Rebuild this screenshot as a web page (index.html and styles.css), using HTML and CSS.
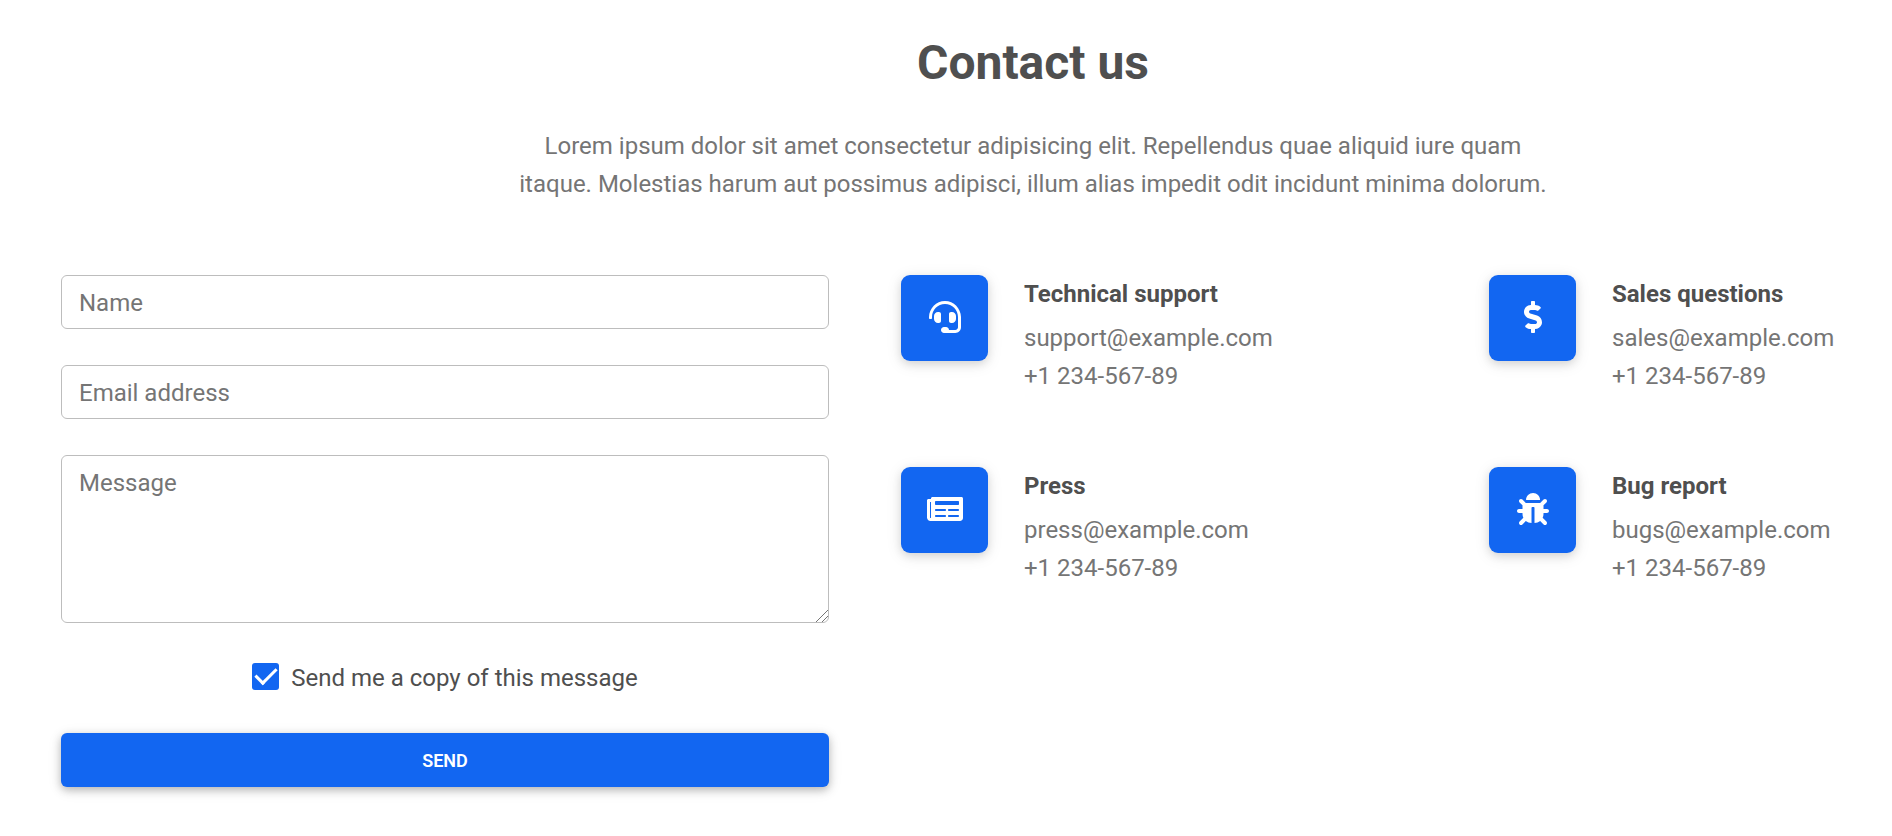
FILE: index.html
```html
<!DOCTYPE html>
<html lang="en">
<head>
<meta charset="utf-8">
<meta name="viewport" content="width=device-width, initial-scale=1">
<title>Contact us</title>
<link rel="stylesheet" href="styles.css">
</head>
<body>
<main class="contact">
  <header class="intro">
    <h1 class="intro-title">Contact us</h1>
    <p class="intro-text">Lorem ipsum dolor sit amet consectetur adipisicing elit. Repellendus quae aliquid iure quam itaque. Molestias harum aut possimus adipisci, illum alias impedit odit incidunt minima dolorum.</p>
  </header>
  <div class="columns">
    <form class="form">
      <input class="field" type="text" name="name" placeholder="Name" aria-label="Name">
      <input class="field" type="email" name="email" placeholder="Email address" aria-label="Email address">
      <textarea class="field field-message" name="message" placeholder="Message" aria-label="Message"></textarea>
      <div class="check">
        <input class="check-input" type="checkbox" id="copy" name="copy" checked>
        <label class="check-label" for="copy">Send me a copy of this message</label>
      </div>
      <button class="send" type="button">SEND</button>
    </form>
    <div class="channels">
      <section class="channel">
        <div class="tile"><svg class="icon" viewBox="0 0 512 512" aria-hidden="true"><path d="M192 208c0-17.67-14.33-32-32-32h-16c-35.35 0-64 28.65-64 64v48c0 35.35 28.65 64 64 64h16c17.67 0 32-14.33 32-32V208zm176 144c35.35 0 64-28.65 64-64v-48c0-35.35-28.65-64-64-64h-16c-17.67 0-32 14.33-32 32v112c0 17.67 14.33 32 32 32h16zM256 0C113.18 0 4.58 118.83 0 256v16c0 8.84 7.16 16 16 16h16c8.84 0 16-7.16 16-16v-16c0-114.69 93.31-208 208-208s208 93.31 208 208h-.12c.08 2.43.12 165.72.12 165.72 0 23.35-18.93 42.28-42.28 42.28H320c0-26.51-21.49-48-48-48h-32c-26.51 0-48 21.49-48 48s21.49 48 48 48h181.72c49.86 0 90.28-40.42 90.28-90.28V256C507.42 118.83 398.82 0 256 0z"/></svg></div>
        <div class="details">
          <h2 class="details-title">Technical support</h2>
          <p class="details-line">support@example.com</p>
          <p class="details-line">+1 234-567-89</p>
        </div>
      </section>
      <section class="channel">
        <div class="tile"><svg class="icon" viewBox="0 0 288 512" aria-hidden="true"><path d="M209.2 233.4l-108-31.6C88.7 198.2 80 186.5 80 173.5c0-16.3 13.2-29.5 29.5-29.5h66.3c12.2 0 24.2 3.7 34.2 10.5 6.1 4.1 14.3 3.1 19.5-2l34.8-34c7.1-6.9 6.1-18.4-1.8-24.5C238 74.8 207.4 64.1 176 64V16c0-8.8-7.2-16-16-16h-32c-8.8 0-16 7.2-16 16v48h-2.5C45.8 64-5.4 118.7.5 183.6c4.2 46.1 39.4 83.6 83.8 96.6l102.5 30c12.5 3.7 21.2 15.3 21.2 28.3 0 16.3-13.2 29.5-29.5 29.5h-66.3C100 368 88 364.3 78 357.5c-6.1-4.1-14.3-3.1-19.5 2l-34.8 34c-7.1 6.9-6.1 18.4 1.8 24.5 24.5 19.2 55.1 29.9 86.5 30v48c0 8.8 7.2 16 16 16h32c8.8 0 16-7.2 16-16v-48.2c46.6-.9 90.3-28.6 105.7-72.7 21.5-61.6-14.6-124.8-72.5-141.7z"/></svg></div>
        <div class="details">
          <h2 class="details-title">Sales questions</h2>
          <p class="details-line">sales@example.com</p>
          <p class="details-line">+1 234-567-89</p>
        </div>
      </section>
      <section class="channel">
        <div class="tile"><svg class="icon" viewBox="0 0 576 512" aria-hidden="true"><path d="M552 64H88c-13.255 0-24 10.745-24 24v8H24c-13.255 0-24 10.745-24 24v272c0 30.928 25.072 56 56 56h472c26.51 0 48-21.49 48-48V88c0-13.255-10.745-24-24-24zM56 400a8 8 0 0 1-8-8V144h16v248a8 8 0 0 1-8 8zm236-16H140c-6.627 0-12-5.373-12-12v-8c0-6.627 5.373-12 12-12h152c6.627 0 12 5.373 12 12v8c0 6.627-5.373 12-12 12zm208 0H348c-6.627 0-12-5.373-12-12v-8c0-6.627 5.373-12 12-12h152c6.627 0 12 5.373 12 12v8c0 6.627-5.373 12-12 12zm-208-96H140c-6.627 0-12-5.373-12-12v-8c0-6.627 5.373-12 12-12h152c6.627 0 12 5.373 12 12v8c0 6.627-5.373 12-12 12zm208 0H348c-6.627 0-12-5.373-12-12v-8c0-6.627 5.373-12 12-12h152c6.627 0 12 5.373 12 12v8c0 6.627-5.373 12-12 12zm0-96H140c-6.627 0-12-5.373-12-12v-40c0-6.627 5.373-12 12-12h360c6.627 0 12 5.373 12 12v40c0 6.627-5.373 12-12 12z"/></svg></div>
        <div class="details">
          <h2 class="details-title">Press</h2>
          <p class="details-line">press@example.com</p>
          <p class="details-line">+1 234-567-89</p>
        </div>
      </section>
      <section class="channel">
        <div class="tile"><svg class="icon" viewBox="0 0 512 512" aria-hidden="true"><path d="M511.988 288.9c-.478 17.43-15.217 31.1-32.653 31.1H424v16c0 21.864-4.882 42.584-13.6 61.145l60.228 60.228c12.496 12.497 12.496 32.758 0 45.255-12.498 12.497-32.759 12.496-45.256 0l-54.736-54.736C345.886 467.965 314.351 480 280 480V236c0-6.627-5.373-12-12-12h-24c-6.627 0-12 5.373-12 12v244c-34.351 0-65.886-12.035-90.636-32.108l-54.736 54.736c-12.498 12.497-32.759 12.496-45.256 0-12.496-12.497-12.496-32.758 0-45.255l60.228-60.228C92.882 378.584 88 357.864 88 336v-16H32.666C15.23 320 .491 306.33.013 288.9-.484 270.816 14.028 256 32 256h56v-58.745l-46.628-46.628c-12.496-12.497-12.496-32.758 0-45.255 12.498-12.497 32.758-12.497 45.256 0L141.255 160h229.489l54.627-54.627c12.498-12.497 32.758-12.497 45.256 0 12.496 12.497 12.496 32.758 0 45.255L424 197.255V256h56c17.972 0 32.484 14.816 31.988 32.9zM257 0c-61.856 0-112 50.144-112 112h224C369 50.144 318.856 0 257 0z"/></svg></div>
        <div class="details">
          <h2 class="details-title">Bug report</h2>
          <p class="details-line">bugs@example.com</p>
          <p class="details-line">+1 234-567-89</p>
        </div>
      </section>
    </div>
  </div>
</main>
</body>
</html>
```
FILE: styles.css
```css
* {
  box-sizing: border-box;
}

body {
  margin: 0;
  background: #fff;
  color: #4f4f4f;
  font-family: Roboto, sans-serif;
  font-size: 24px;
  line-height: 38px;
}

h1,
h2,
p {
  margin: 0;
}

.contact {
  padding: 34px 0 36px;
}

.intro {
  display: flex;
  flex-direction: column;
  align-items: center;
  gap: 35px;
  padding-left: 174px;
  margin-bottom: 72px;
  text-align: center;
}

.intro-title {
  font-size: 48px;
  font-weight: 700;
  line-height: 58px;
}

.intro-text {
  max-width: 1040px;
  color: #757575;
}

.columns {
  display: grid;
  grid-template-columns: 768fr 991fr;
  align-items: start;
  gap: 72px;
  padding-left: 61px;
}

.form {
  display: flex;
  flex-direction: column;
  gap: 36px;
}

.field {
  display: block;
  width: 100%;
  height: 54px;
  padding: 8px 17px 6px;
  border: 1px solid #bdbdbd;
  border-radius: 6px;
  background: #fff;
  color: #4f4f4f;
  font: inherit;
}

.field::placeholder {
  color: #757575;
  opacity: 1;
}

.field-message {
  height: 168px;
  resize: vertical;
}

.field-message::-webkit-resizer {
  background: linear-gradient(135deg, transparent 58%, #757575 58%, #757575 62%, transparent 62%, transparent 78%, #757575 78%, #757575 82%, transparent 82%);
}

.check {
  display: flex;
  align-items: center;
  justify-content: center;
  gap: 12px;
}

.check-input {
  display: grid;
  place-items: center;
  width: 27px;
  height: 27px;
  margin: 0 0 3px;
  border-radius: 3px;
  background: #1266f1;
  appearance: none;
}

.check-input::before {
  width: 9px;
  height: 18px;
  margin-bottom: 6px;
  border: solid #fff;
  border-width: 0 3px 3px 0;
  content: "";
  transform: rotate(45deg);
}

.send {
  height: 54px;
  border: 0;
  border-radius: 6px;
  background: #1266f1;
  box-shadow: 0 3px 8px rgba(0, 0, 0, 0.25), 0 3px 16px rgba(0, 0, 0, 0.08);
  color: #fff;
  font-family: inherit;
  font-size: 18px;
  font-weight: 600;
}

.channels {
  display: grid;
  grid-template-columns: 588fr 403fr;
  row-gap: 72px;
}

.channel {
  display: flex;
  align-items: flex-start;
  gap: 36px;
}

.tile {
  display: flex;
  flex: none;
  align-items: center;
  justify-content: center;
  width: 87px;
  height: 86px;
  padding-bottom: 2px;
  border-radius: 9px;
  background: #1266f1;
  box-shadow: 0 3px 16px rgba(0, 0, 0, 0.1), 0 3px 8px rgba(0, 0, 0, 0.1);
}

.icon {
  height: 32px;
  fill: #fff;
}

.details-title {
  margin-bottom: 6px;
  font-size: 24px;
  font-weight: 700;
}

.details-line {
  color: #757575;
}
```
